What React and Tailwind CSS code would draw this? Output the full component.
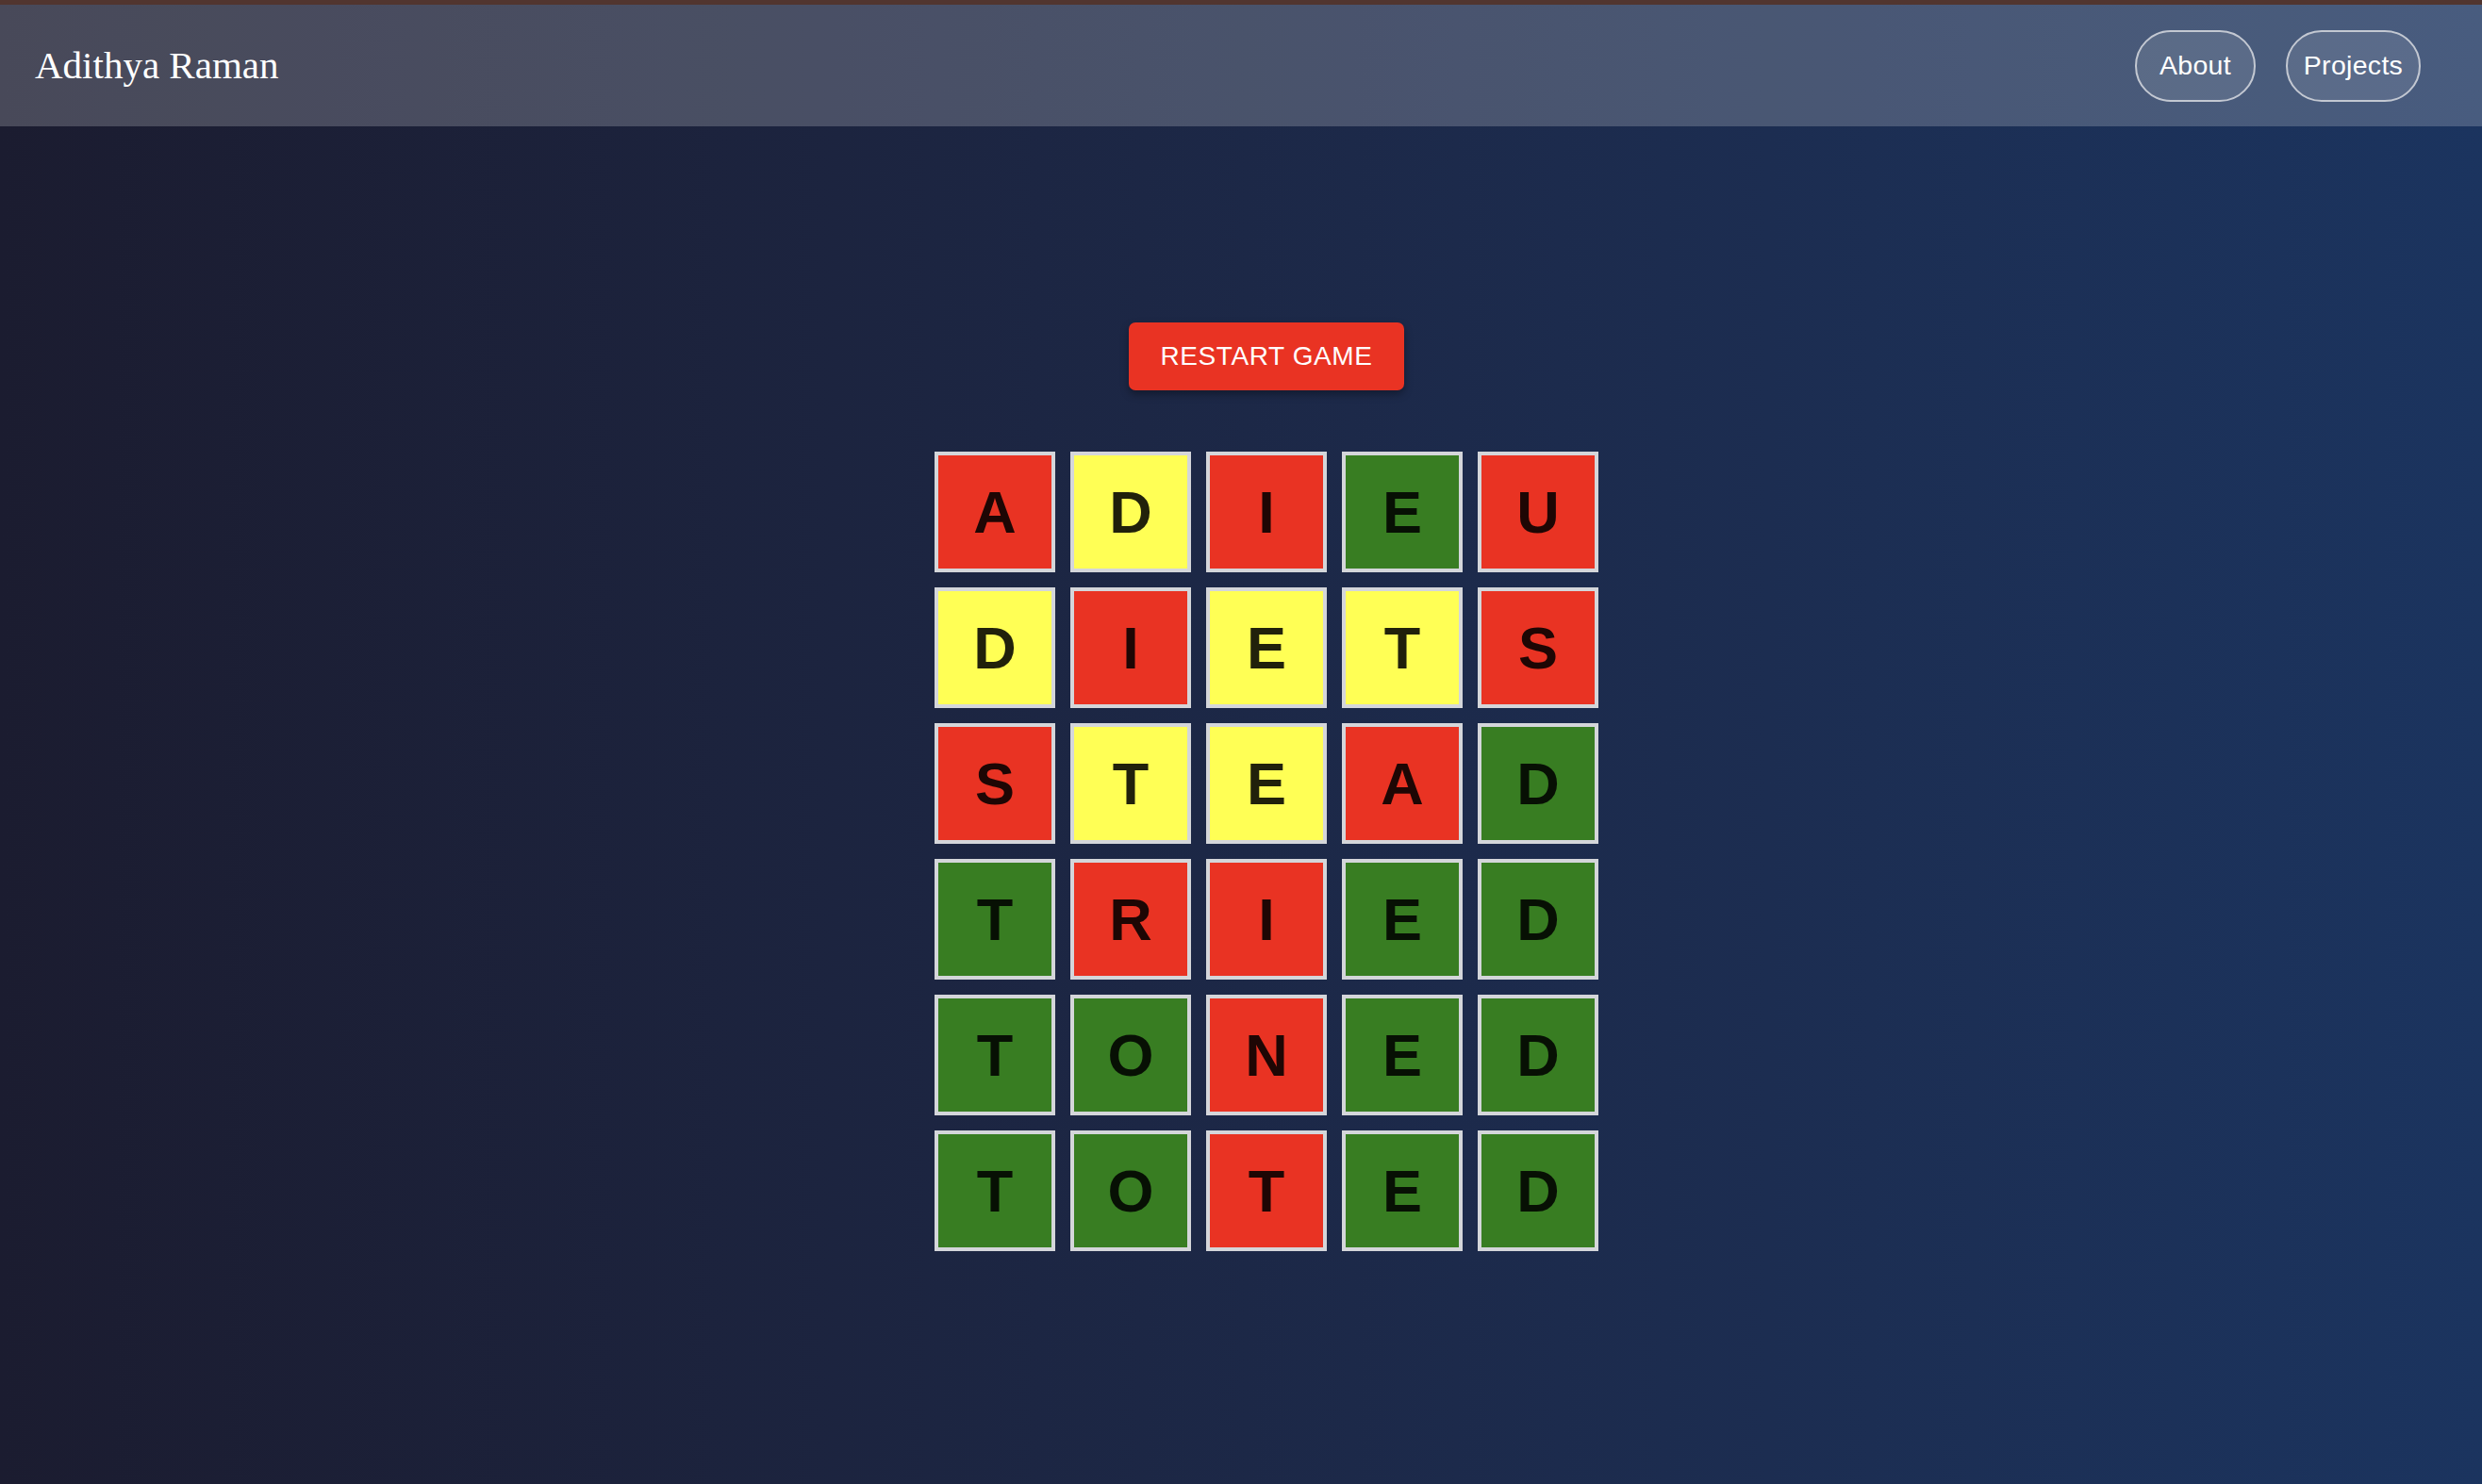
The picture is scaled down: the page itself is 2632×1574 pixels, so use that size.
import React from "react";

const RED = "bg-[#e93323]";
const YELLOW = "bg-[#ffff55]";
const GREEN = "bg-[#387d22]";

const rows = [
  [["A", RED], ["D", YELLOW], ["I", RED], ["E", GREEN], ["U", RED]],
  [["D", YELLOW], ["I", RED], ["E", YELLOW], ["T", YELLOW], ["S", RED]],
  [["S", RED], ["T", YELLOW], ["E", YELLOW], ["A", RED], ["D", GREEN]],
  [["T", GREEN], ["R", RED], ["I", RED], ["E", GREEN], ["D", GREEN]],
  [["T", GREEN], ["O", GREEN], ["N", RED], ["E", GREEN], ["D", GREEN]],
  [["T", GREEN], ["O", GREEN], ["T", RED], ["E", GREEN], ["D", GREEN]],
];

const Header = () => {
  return (
    <header className="h-[129px] bg-white/20 pl-[37px] pr-[65px] flex items-center justify-between">
      <h1 className="text-[41px] text-white font-['Liberation_Serif',serif] leading-none">
        Adithya Raman
      </h1>
      <nav className="flex items-center gap-[32px] font-['Liberation_Sans',Arial,sans-serif] text-[28.5px] tracking-[0.3px] text-white">
        <button className="w-[128px] h-[76px] rounded-full border-2 border-[#c3c8d2] bg-white/10 flex items-center justify-center">
          About
        </button>
        <button className="w-[143px] h-[76px] rounded-full border-2 border-[#c3c8d2] bg-white/10 flex items-center justify-center">
          Projects
        </button>
      </nav>
    </header>
  );
};

const Tile = ({ letter, color }) => (
  <div
    className={`w-[128px] h-[128px] border-4 border-[#d4d6da] ${color} flex items-center justify-center text-[63px] font-bold text-black/[0.87] font-['Liberation_Sans',Arial,sans-serif]`}
  >
    {letter}
  </div>
);

export default function App() {
  return (
    <div className="w-full h-[1574px] overflow-hidden border-t-[5px] border-[#51352f] bg-gradient-to-r from-[#1b1c30] to-[#1b345f]">
      <Header />
      <main className="pl-[54px] pt-[208px] flex flex-col items-center">
        <button className="w-[292px] h-[72px] rounded-[7px] bg-[#e93323] text-white text-[28px] tracking-[0.6px] font-['Liberation_Sans',Arial,sans-serif] shadow-[0_4px_8px_rgba(0,0,0,0.35)]">
          RESTART GAME
        </button>
        <div className="mt-[65px] grid grid-cols-5 gap-4">
          {rows.map((row, r) =>
            row.map(([letter, color], c) => (
              <Tile key={`${r}-${c}`} letter={letter} color={color} />
            ))
          )}
        </div>
      </main>
    </div>
  );
}
